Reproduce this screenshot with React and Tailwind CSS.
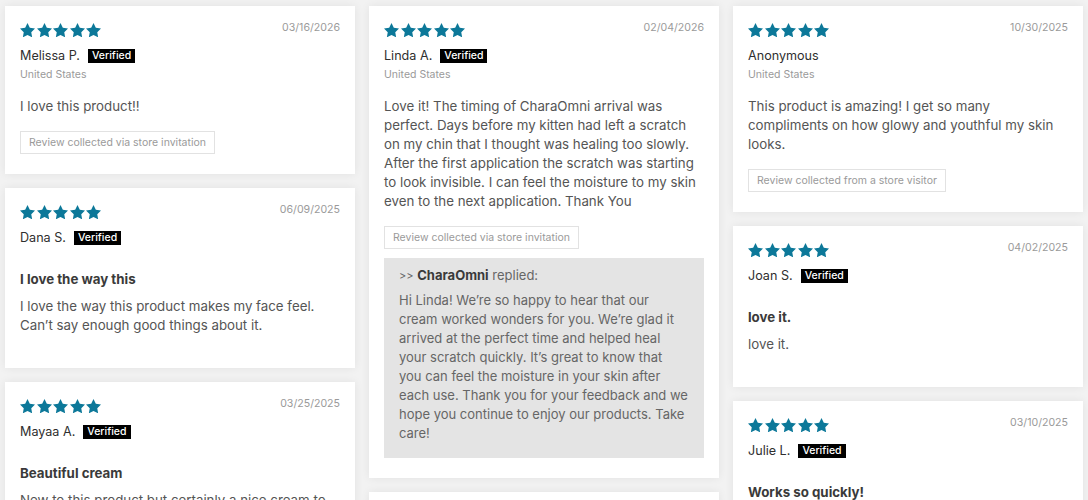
import React from "react";

const STAR = "M12 2l3.09 6.26L22 9.27l-5 4.87 1.18 6.88L12 17.77l-6.18 3.25L7 14.14 2 9.27l6.91-1.01L12 2z";

function Stars() {
  return (
    <div className="flex items-center">
      {[0, 1, 2, 3, 4].map((i) => (
        <svg key={i} viewBox="2 2 20 19.2" className="w-[15px] h-[14.5px] mr-[1.6px] fill-[#0c7899]">
          <path d={STAR} />
        </svg>
      ))}
    </div>
  );
}

function Lines({ lines }) {
  return lines.map((l, i) => (
    <React.Fragment key={i}>
      {l}
      {i < lines.length - 1 && <br />}
    </React.Fragment>
  ));
}

function Card({ date, name, verified = true, country, title, body, badge, reply }) {
  return (
    <div className={`bg-white shadow-[0_0_9px_rgba(0,0,0,0.07)] px-[15px] pt-[16px] ${title && !badge ? "pb-[33px]" : "pb-[20px]"}`}>
      <div className="flex items-center justify-between h-[16px]">
        <Stars />
        <span className="text-[10.6px] leading-[16px] text-[#9a9a9a] -mt-[4px]">{date}</span>
      </div>
      <div className="mt-[8px] flex items-center h-[20px]">
        <span className="text-[12.6px] text-[#2f2f2f]">{name}</span>
        {verified && (
          <span className="ml-[8px] bg-black text-white text-[10.5px] leading-[14px] font-medium px-[4px] h-[14px] flex items-center">
            Verified
          </span>
        )}
      </div>
      {country && <div className="text-[10.5px] leading-[18px] text-[#9a9a9a]">{country}</div>}
      {title ? (
        <div className="mt-[22px] text-[13.3px] leading-[19px] font-bold text-[#3a3a3a]">{title}</div>
      ) : null}
      <div className={`${title ? "mt-[8px]" : "mt-[13px]"} text-[13.3px] leading-[19px] text-[#555] whitespace-nowrap`}>
        <Lines lines={body} />
      </div>
      {badge && (
        <div className="mt-[15px] inline-flex items-center h-[23px] border border-[#e2e2e2] px-[8px] text-[10.5px] text-[#9a9a9a]">
          {badge}
        </div>
      )}
      {reply && (
        <div className="mt-[9px] bg-[#e4e4e4] px-[15px] pt-[8px] pb-[15px]">
          <div className="text-[13px] leading-[19px] text-[#666]">
            <span className="text-[11px]">&gt;&gt;</span> <span className="font-bold text-[#3a3a3a]">CharaOmni</span> replied:
          </div>
          <div className="mt-[5px] text-[13px] leading-[19px] text-[#666] whitespace-nowrap">
            <Lines lines={reply} />
          </div>
        </div>
      )}
    </div>
  );
}

export default function App() {
  return (
    <div
      className="h-[500px] overflow-hidden bg-[#f2f2f2] px-[5px] pt-[6px] flex gap-[14px] items-start"
      style={{ fontFamily: "Inter, 'Noto Sans', sans-serif" }}
    >
      <div className="flex-1 min-w-0 flex flex-col gap-[14px]">
        <Card
          date="03/16/2026"
          name="Melissa P."
          country="United States"
          body={["I love this product!!"]}
          badge="Review collected via store invitation"
        />
        <Card
          date="06/09/2025"
          name="Dana S."
          title="I love the way this"
          body={["I love the way this product makes my face feel.", "Can’t say enough good things about it."]}
        />
        <Card
          date="03/25/2025"
          name="Mayaa A."
          title="Beautiful cream"
          body={["New to this product but certainly a nice cream to", "use every day. My skin feels soft and smooth."]}
        />
      </div>
      <div className="flex-1 min-w-0 flex flex-col gap-[14px]">
        <Card
          date="02/04/2026"
          name="Linda A."
          country="United States"
          body={[
            "Love it! The timing of CharaOmni arrival was",
            "perfect. Days before my kitten had left a scratch",
            "on my chin that I thought was healing too slowly.",
            "After the first application the scratch was starting",
            "to look invisible. I can feel the moisture to my skin",
            "even to the next application. Thank You",
          ]}
          badge="Review collected via store invitation"
          reply={[
            "Hi Linda! We’re so happy to hear that our",
            "cream worked wonders for you. We’re glad it",
            "arrived at the perfect time and helped heal",
            "your scratch quickly. It’s great to know that",
            "you can feel the moisture in your skin after",
            "each use. Thank you for your feedback and we",
            "hope you continue to enjoy our products. Take",
            "care!",
          ]}
        />
        <Card
          date="02/18/2025"
          name="Karen M."
          title="Great cream"
          body={["My skin feels so smooth after using it."]}
        />
      </div>
      <div className="flex-1 min-w-0 flex flex-col gap-[14px]">
        <Card
          date="10/30/2025"
          name="Anonymous"
          verified={false}
          country="United States"
          body={["This product is amazing! I get so many", "compliments on how glowy and youthful my skin", "looks."]}
          badge="Review collected from a store visitor"
        />
        <Card date="04/02/2025" name="Joan S." title="love it." body={["love it."]} />
        <Card
          date="03/10/2025"
          name="Julie L."
          title="Works so quickly!"
          body={["I noticed a difference after just a few days."]}
        />
      </div>
    </div>
  );
}
